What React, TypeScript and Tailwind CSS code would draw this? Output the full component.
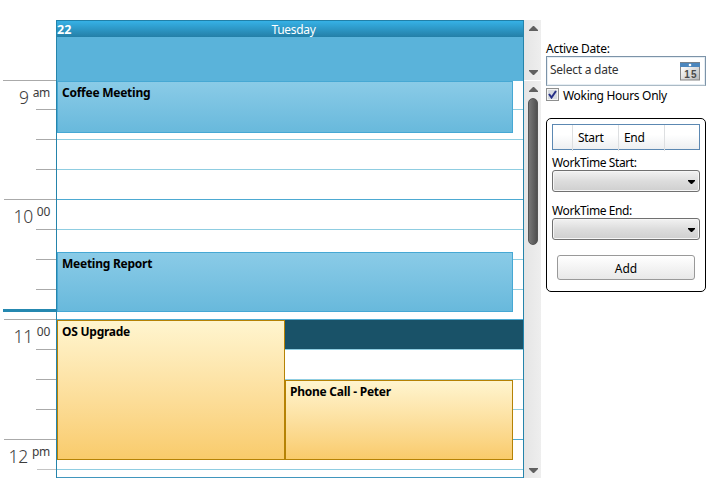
import type { ReactNode } from "react";

const hours = [
  { hour: "9", suffix: "am" },
  { hour: "10", suffix: "00" },
  { hour: "11", suffix: "00" },
];

function Arrow({ up = false }: { up?: boolean }) {
  return (
    <svg width="9" height="5" viewBox="0 0 9 5" className="block shrink-0">
      <path d={up ? "M0 5V4L4 0H5L9 4V5Z" : "M0 0V1L4 5H5L9 1V0Z"} fill="#606060" />
    </svg>
  );
}

function TimeLabel({ hour, suffix }: { hour: string; suffix: string }) {
  return (
    <div className="flex h-[29px] w-[47px] items-start justify-end gap-[4px] text-[#3c3c3c]">
      <span className="pt-[4px] text-[17.5px] leading-[24px] font-light tracking-[-0.3px]">{hour}</span>
      <span className="pt-[4px] text-[12px] leading-[15px] tracking-[-0.3px]">{suffix}</span>
    </div>
  );
}

function HourRow({ hour, suffix, first = false }: { hour: string; suffix: string; first?: boolean }) {
  return (
    <div className={first ? "h-[119px]" : "h-[120px]"}>
      <div className={first ? "h-px bg-[#aaa]" : "ml-px h-px bg-[#aaa]"} />
      <div className={first ? "h-[28px]" : "h-[29px]"}>
        <TimeLabel hour={hour} suffix={suffix} />
      </div>
      <div className="ml-[33px] h-[30px] border-t border-[#aaa]" />
      <div className="ml-[33px] h-[30px] border-t border-[#aaa]" />
      <div className="ml-[33px] h-[30px] border-t border-[#aaa]" />
    </div>
  );
}

function Appointment({ className, children }: { className: string; children: ReactNode }) {
  return (
    <div className={`absolute border pt-[3px] pl-[4px] text-[12px] leading-[15px] font-bold tracking-[-0.25px] text-black ${className}`}>
      {children}
    </div>
  );
}

function Combo() {
  return (
    <div className="flex h-[22px] items-center justify-end rounded-[3px] border border-[#707070] bg-linear-to-b from-[#f2f2f2] from-0% via-[#dddddd] via-50% to-[#cfcfcf] pr-[4px] shadow-[inset_0_0_0_1px_#f6f6f6]">
      <svg width="7" height="4" viewBox="0 0 7 4" className="mt-px">
        <path d="M0 0H7V1L4 4H3L0 1Z" fill="#000" />
      </svg>
    </div>
  );
}

function CalendarIcon() {
  return (
    <svg width="20" height="19" viewBox="0 0 20 19" className="block">
      <defs>
        <linearGradient id="page" x1="0" y1="0" x2="1" y2="1">
          <stop offset="0.2" stopColor="#fafafa" />
          <stop offset="1" stopColor="#b8b8b8" />
        </linearGradient>
      </defs>
      <rect x="0.5" y="0.5" width="19" height="17.5" fill="url(#page)" stroke="#858585" />
      <rect x="0" y="0" width="20" height="5" fill="#4b86bd" />
      <path d="M0 .5H20" stroke="#77818a" />
      <circle cx="10" cy="3" r="1.3" fill="#fff" />
      <text x="10.2" y="15.5" textAnchor="middle" fontSize="10" fontWeight="700" textLength="12" fontFamily="Liberation Sans, sans-serif" fill="#4a4a4a">15</text>
    </svg>
  );
}

export default function App() {
  return (
    <div className="flex h-[500px] w-[715px] items-start overflow-hidden bg-white pt-[20px] pl-[3px] font-['Noto_Sans',sans-serif] text-[12px] text-black">
      <aside className="w-[53px] shrink-0 pt-[60px]">
        <div className="relative h-[390px]">
          {hours.map((h, i) => (
            <HourRow key={i} hour={h.hour} suffix={h.suffix} first={i === 0} />
          ))}
          <div className="ml-px h-px bg-[#aaa]" />
          <div className="h-[29px]">
            <TimeLabel hour="12" suffix="pm" />
          </div>
          <div className="ml-[34px] h-px bg-[#c4c4c4]" />
          <div className="absolute top-[229px] left-0 h-[3px] w-[53px] bg-[#2588b0]" />
        </div>
      </aside>

      <main className="w-[468px] shrink-0 border-x border-[#2584ab]">
        <header className="grid h-[17px] grid-cols-[1fr_auto_1fr] items-start border-t border-[#2080a8] bg-linear-to-b from-[#36b1e6] to-[#247fa7] pt-px leading-[16px] text-white">
          <span className="text-[12.5px] font-bold">22</span>
          <span className="pl-[7px] tracking-[-0.3px]">Tuesday</span>
          <span />
        </header>
        <div className="h-[44px] bg-[#5ab3da]" />
        <div className="relative h-[397px] border-b border-[#4196bd]">
          <div className="h-[28px]" />
          {Array.from({ length: 13 }, (_, i) => (
            <div
              key={i}
              className={`border-t ${i === 12 ? "h-[8px]" : "h-[30px]"} ${i % 4 === 3 ? "border-[#4daad2]" : "border-[#8fcde1]"}`}
            />
          ))}
          <div className="absolute top-[239px] left-[228px] h-[29px] w-[238px] bg-[#195268]" />
          <Appointment className="top-0 left-0 h-[52px] w-[456px] border-[#46a8d4] bg-linear-to-b from-[#8acbe7] to-[#68b9dc]">
            Coffee Meeting
          </Appointment>
          <Appointment className="top-[171px] left-0 h-[60px] w-[456px] border-[#46a8d4] bg-linear-to-b from-[#8acbe7] to-[#68b9dc]">
            Meeting Report
          </Appointment>
          <Appointment className="top-[239px] left-0 h-[140px] w-[228px] border-[#b58205] bg-linear-to-b from-[#fff5cf] to-[#f9cb6b]">
            OS Upgrade
          </Appointment>
          <Appointment className="top-[299px] left-[228px] h-[80px] w-[228px] border-[#b58205] bg-linear-to-b from-[#fff5cf] to-[#f9cb6b]">
            Phone Call - Peter
          </Appointment>
        </div>
      </main>

      <div className="w-[17px] shrink-0">
        <div className="flex h-[60px] flex-col items-center justify-between bg-linear-to-r from-[#e5e5e5] to-[#eeeeee] pt-[6px] pb-[5px] pl-px">
          <Arrow up />
          <Arrow />
        </div>
        <div className="mt-px flex h-[397px] flex-col items-center bg-linear-to-r from-[#e5e5e5] to-[#eeeeee] pt-[6px] pb-[5px] pl-px">
          <Arrow up />
          <div className="mt-[6px] h-[147px] w-[10px] rounded-full border border-[#555] bg-linear-to-r from-[#777] to-[#505050]" />
          <div className="grow" />
          <Arrow />
        </div>
      </div>

      <section className="ml-[5px] w-[160px] pt-[20px] tracking-[-0.3px]">
        <div className="h-[16px] leading-[18px] tracking-[-0.25px]">Active Date:</div>
        <div className="flex h-[30px] items-start justify-between border border-[#7c93a8] border-b-[#abbac5] pt-[5px] pr-[5px] pl-[3px] shadow-[inset_0_0_0_1px_#e5edf3]">
          <span className="leading-[15px] tracking-[-0.25px] text-[#333]">Select a date</span>
          <CalendarIcon />
        </div>
        <label className="flex h-[19px] items-start pt-[2px]">
          <span className="flex h-[13px] w-[13px] items-center justify-center border border-[#8e8f8f] bg-[#d7dbe0] shadow-[inset_0_0_0_1px_#f4f4f4]">
            <svg width="9" height="9" viewBox="0 0 9 9">
              <path d="M1 4L3.5 7.5L8 1" fill="none" stroke="#263087" strokeWidth="2" />
            </svg>
          </span>
          <span className="ml-[4px] leading-[16px]">Woking Hours Only</span>
        </label>

        <div className="mt-[13px] h-[174px] rounded-[5px] border border-black px-[5px] pt-[5px]">
          <div className="grid h-[26px] grid-cols-[20px_46px_46px_1fr] border border-[#5c88b2] bg-linear-to-b from-white from-40% to-[#edeff1] leading-[26px] tracking-[-0.3px]">
            <span className="border-r border-[#dddfe1]" />
            <span className="border-r border-[#dddfe1] pl-[5px]">Start</span>
            <span className="border-r border-[#dddfe1] pl-[5px]">End</span>
            <span />
          </div>
          <div className="h-[20px] pt-[4px] leading-[18px] tracking-[-0.4px]">WorkTime Start:</div>
          <Combo />
          <div className="mt-[6px] h-[20px] pt-[4px] leading-[18px] tracking-[-0.4px]">WorkTime End:</div>
          <Combo />
          <button className="mt-[15px] ml-[5px] block h-[25px] w-[138px] rounded-[3px] border border-[#999] bg-linear-to-b from-white to-[#e8e8e8] pt-px leading-[23px] tracking-normal">
            Add
          </button>
        </div>
      </section>
    </div>
  );
}
